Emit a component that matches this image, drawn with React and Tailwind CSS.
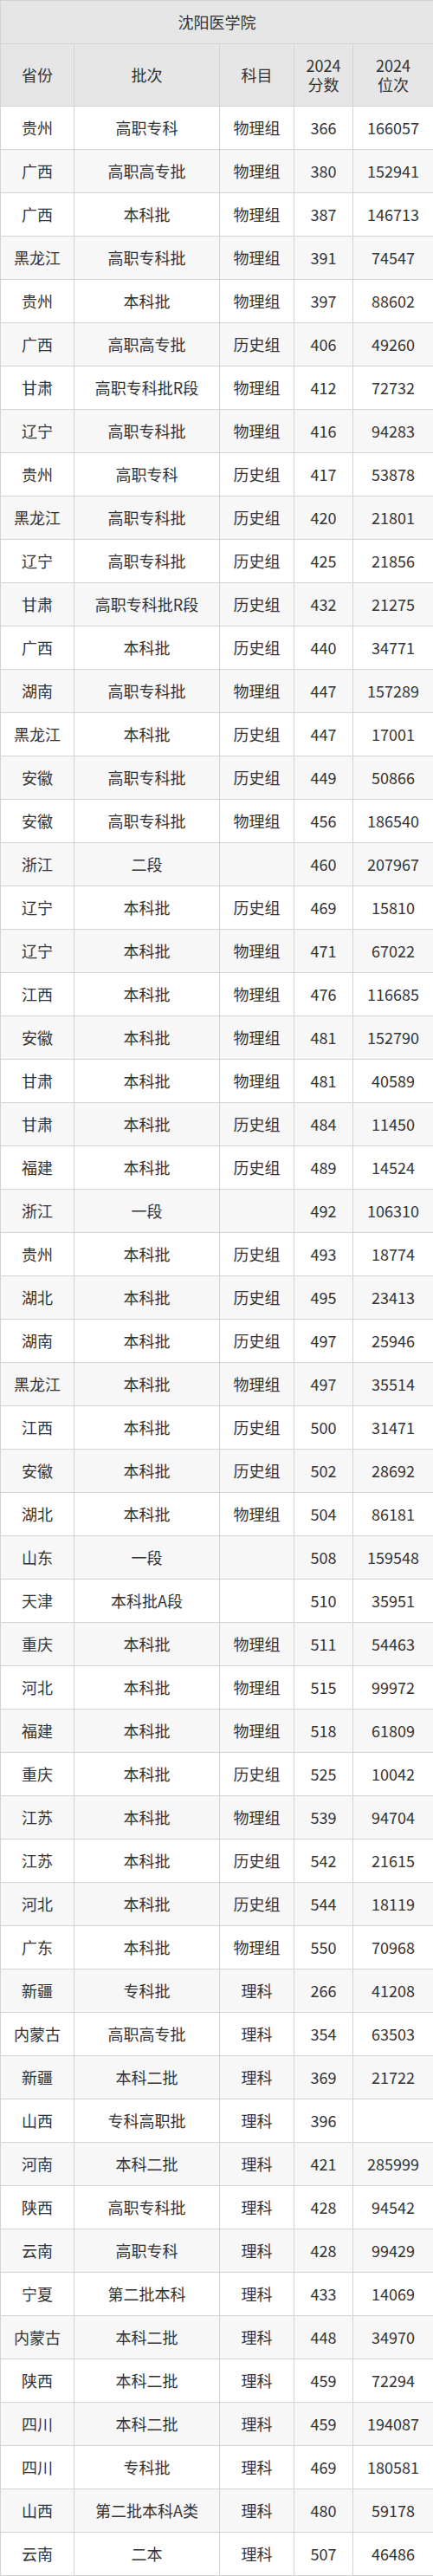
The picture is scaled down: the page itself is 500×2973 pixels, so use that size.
const rows = [
  ["贵州", "高职专科", "物理组", "366", "166057"],
  ["广西", "高职高专批", "物理组", "380", "152941"],
  ["广西", "本科批", "物理组", "387", "146713"],
  ["黑龙江", "高职专科批", "物理组", "391", "74547"],
  ["贵州", "本科批", "物理组", "397", "88602"],
  ["广西", "高职高专批", "历史组", "406", "49260"],
  ["甘肃", "高职专科批R段", "物理组", "412", "72732"],
  ["辽宁", "高职专科批", "物理组", "416", "94283"],
  ["贵州", "高职专科", "历史组", "417", "53878"],
  ["黑龙江", "高职专科批", "历史组", "420", "21801"],
  ["辽宁", "高职专科批", "历史组", "425", "21856"],
  ["甘肃", "高职专科批R段", "历史组", "432", "21275"],
  ["广西", "本科批", "历史组", "440", "34771"],
  ["湖南", "高职专科批", "物理组", "447", "157289"],
  ["黑龙江", "本科批", "历史组", "447", "17001"],
  ["安徽", "高职专科批", "历史组", "449", "50866"],
  ["安徽", "高职专科批", "物理组", "456", "186540"],
  ["浙江", "二段", "", "460", "207967"],
  ["辽宁", "本科批", "历史组", "469", "15810"],
  ["辽宁", "本科批", "物理组", "471", "67022"],
  ["江西", "本科批", "物理组", "476", "116685"],
  ["安徽", "本科批", "物理组", "481", "152790"],
  ["甘肃", "本科批", "物理组", "481", "40589"],
  ["甘肃", "本科批", "历史组", "484", "11450"],
  ["福建", "本科批", "历史组", "489", "14524"],
  ["浙江", "一段", "", "492", "106310"],
  ["贵州", "本科批", "历史组", "493", "18774"],
  ["湖北", "本科批", "历史组", "495", "23413"],
  ["湖南", "本科批", "历史组", "497", "25946"],
  ["黑龙江", "本科批", "物理组", "497", "35514"],
  ["江西", "本科批", "历史组", "500", "31471"],
  ["安徽", "本科批", "历史组", "502", "28692"],
  ["湖北", "本科批", "物理组", "504", "86181"],
  ["山东", "一段", "", "508", "159548"],
  ["天津", "本科批A段", "", "510", "35951"],
  ["重庆", "本科批", "物理组", "511", "54463"],
  ["河北", "本科批", "物理组", "515", "99972"],
  ["福建", "本科批", "物理组", "518", "61809"],
  ["重庆", "本科批", "历史组", "525", "10042"],
  ["江苏", "本科批", "物理组", "539", "94704"],
  ["江苏", "本科批", "历史组", "542", "21615"],
  ["河北", "本科批", "历史组", "544", "18119"],
  ["广东", "本科批", "物理组", "550", "70968"],
  ["新疆", "专科批", "理科", "266", "41208"],
  ["内蒙古", "高职高专批", "理科", "354", "63503"],
  ["新疆", "本科二批", "理科", "369", "21722"],
  ["山西", "专科高职批", "理科", "396", ""],
  ["河南", "本科二批", "理科", "421", "285999"],
  ["陕西", "高职专科批", "理科", "428", "94542"],
  ["云南", "高职专科", "理科", "428", "99429"],
  ["宁夏", "第二批本科", "理科", "433", "14069"],
  ["内蒙古", "本科二批", "理科", "448", "34970"],
  ["陕西", "本科二批", "理科", "459", "72294"],
  ["四川", "本科二批", "理科", "459", "194087"],
  ["四川", "专科批", "理科", "469", "180581"],
  ["山西", "第二批本科A类", "理科", "480", "59178"],
  ["云南", "二本", "理科", "507", "46486"],
];

export default function App() {
  return (
    <div className="w-[500px] bg-white text-[#333] font-['Noto_Sans_CJK_SC','Noto_Sans',sans-serif] text-[18px]">
      <table className="w-[500px] table-fixed border-collapse text-center">
        <colgroup>
          <col className="w-[85px]" />
          <col className="w-[168px]" />
          <col className="w-[86px]" />
          <col className="w-[68px]" />
          <col className="w-[93px]" />
        </colgroup>
        <thead>
          <tr className="h-[50px] bg-[#e6e6e6]">
            <th colSpan={5} className="border border-[#d4d4d4] font-normal">
              沈阳医学院
            </th>
          </tr>
          <tr className="h-[72px] bg-[#e6e6e6] leading-[1.2]">
            <th className="border border-[#d4d4d4] font-normal">省份</th>
            <th className="border border-[#d4d4d4] font-normal">批次</th>
            <th className="border border-[#d4d4d4] font-normal">科目</th>
            <th className="border border-[#d4d4d4] font-normal">
              2024
              <br />
              分数
            </th>
            <th className="border border-[#d4d4d4] font-normal">
              2024
              <br />
              位次
            </th>
          </tr>
        </thead>
        <tbody className="[&>tr:nth-child(even)]:bg-[#f7f7f7]">
          {rows.map((r, i) => (
            <tr key={i} className="h-[50px]">
              {r.map((c, j) => (
                <td key={j} className="border border-[#d4d4d4] whitespace-nowrap px-0">
                  {c}
                </td>
              ))}
            </tr>
          ))}
        </tbody>
      </table>
    </div>
  );
}
